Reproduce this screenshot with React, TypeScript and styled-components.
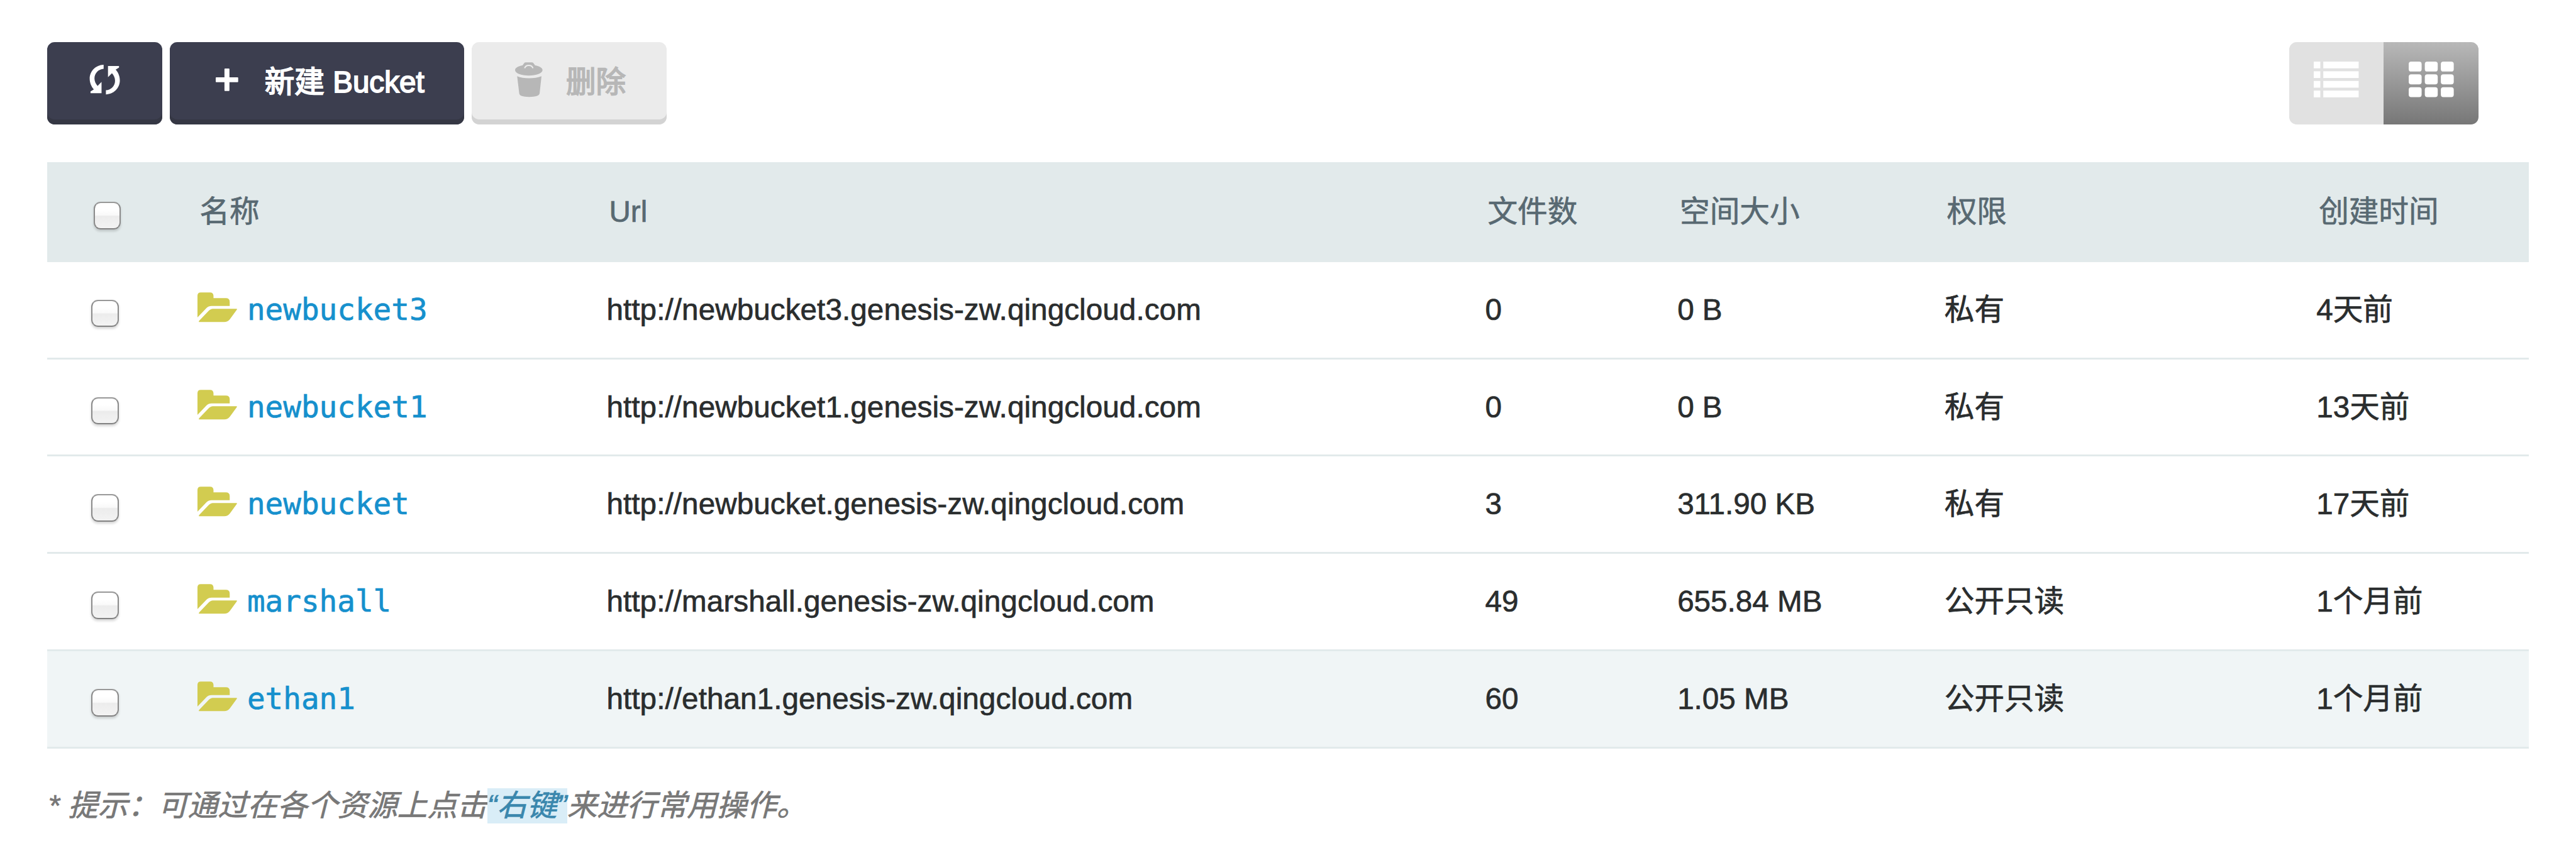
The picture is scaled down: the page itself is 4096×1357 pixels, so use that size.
import React from "react";
import styled, { createGlobalStyle } from "styled-components";

const u = (n: number) => `${(n * 4096) / 4128}px`;

const sans = `"Liberation Sans", "Noto Sans CJK SC", sans-serif`;
const mono = `"DejaVu Sans Mono", monospace`;

const GlobalStyle = createGlobalStyle`
  *, *::before, *::after { box-sizing: border-box; }
  html, body { margin: 0; padding: 0; background: #fff; }
`;

const Page = styled.main`
  width: 100%;
  height: 1357px;
  overflow: hidden;
  padding: ${u(68)} ${u(76)} 0;
  background: #fff;
  font-family: ${sans};
  font-size: ${u(48)};
  line-height: ${u(56)};
  color: #2a2d2e;
  -webkit-text-stroke: ${u(0.7)} currentColor;
`;

const Toolbar = styled.div`
  display: flex;
  justify-content: space-between;
  height: ${u(132)};
  margin-bottom: ${u(60)};
  padding-right: ${u(80)};
`;

const Actions = styled.div`
  display: flex;
  gap: ${u(12)};
`;

const Button = styled.button<{ $width: number; $pad: number; $gap: number }>`
  display: flex;
  align-items: center;
  gap: ${(p) => u(p.$gap)};
  width: ${(p) => u(p.$width)};
  height: 100%;
  padding: 0 0 ${u(5)} ${(p) => u(p.$pad)};
  border: 0;
  border-radius: ${u(12)};
  background: #3c3e4f;
  box-shadow: inset 0 -${u(8)} 0 #353744;
  color: #fff;
  font: inherit;
  white-space: nowrap;
  -webkit-text-stroke: ${u(1.8)} currentColor;

  &:disabled {
    background: #ebebeb;
    box-shadow: inset 0 -${u(8)} 0 #d3d3d3;
    color: #b7b7b7;
  }
`;

const Icon = styled.svg<{ $w: number; $h: number; $lift?: number }>`
  display: block;
  flex: none;
  width: ${(p) => u(p.$w)};
  height: ${(p) => u(p.$h)};
  margin-bottom: ${(p) => u(p.$lift ?? 0)};
  overflow: visible;
`;

const ViewSwitch = styled.div`
  display: flex;
  border-radius: ${u(12)};
  overflow: hidden;
`;

const ViewOption = styled.button<{ $active?: boolean }>`
  display: flex;
  justify-content: center;
  width: ${u(152)};
  height: 100%;
  padding: ${u(31)} 0 0;
  border: 0;
  background: ${(p) => (p.$active ? "linear-gradient(#b8b8b8, #777)" : "#e1e1e1")};
`;

const Table = styled.div`
  width: 100%;
`;

const Row = styled.div<{ $selected?: boolean }>`
  display: grid;
  grid-template-columns: ${[240, 656, 1408, 308, 428, 596].map(u).join(" ")} 1fr;
  align-items: center;
  height: ${u(156)};
  border-bottom: ${u(4)} solid #e2eaeb;
  background: ${(p) => (p.$selected ? "#f0f5f6" : "#fff")};
  white-space: nowrap;
`;

const HeadRow = styled(Row)`
  height: ${u(160)};
  padding-bottom: ${u(1)};
  border-bottom: 0;
  background: #e2eaeb;
  color: #586972;

  > * {
    padding-left: ${u(4)};
  }
`;

const CheckCell = styled.div`
  display: flex;
  padding: ${u(12)} 0 0 ${u(70)};

  ${HeadRow} > & {
    padding: ${u(12)} 0 0 ${u(74)};
  }
`;

const Checkbox = styled.input`
  appearance: none;
  width: ${u(44)};
  height: ${u(44)};
  margin: 0;
  border: ${u(3)} solid #8b8b8b;
  border-color: #989898 #8b8b8b #828282;
  border-radius: ${u(11)};
  background: linear-gradient(#fff 0 25%, #f9f9f9 48%, #ececec 52%, #f3f3f3);
  box-shadow: 0 ${u(3)} ${u(4)} rgba(0, 0, 0, 0.16);
`;

const NameCell = styled.div`
  display: flex;
  align-items: center;
  gap: ${u(16)};
`;

const BucketLink = styled.a`
  color: #1690cd;
  font-family: ${mono};
  text-decoration: none;
`;

const Cell = styled.div``;

const UrlCell = styled(Cell)`
  letter-spacing: ${u(0.08)};
`;

const Tip = styled.p`
  margin: ${u(64)} 0 0;
  padding-left: ${u(1)};
  color: #787878;
  font-style: italic;
  white-space: nowrap;
`;

const Highlight = styled.span`
  display: inline-block;
  background: #d9edf7;
  color: #3a87ad;
`;

const RefreshIcon = () => {
  const arc =
    "M90 30C52 31 23 61 23 97C23 117 31 136 43 149L27 159V167H80V113L61 132C52 122 46 110 46 96C46 72 65 51 90 50Z";
  return (
    <Icon viewBox="0 0 192 192" $w={64} $h={64} $lift={11} fill="currentColor">
      <path d={arc} />
      <path d={arc} transform="rotate(180 95.5 101.5)" />
    </Icon>
  );
};

const PlusIcon = () => (
  <Icon viewBox="0 0 36 36" $w={36} $h={36} $lift={7} fill="currentColor">
    <path d="M14 1q0-1 1-1h6q1 0 1 1v13h13q1 0 1 1v6q0 1-1 1H22v13q0 1-1 1h-6q-1 0-1-1V22H1q-1 0-1-1v-6q0-1 1-1h13z" />
  </Icon>
);

const TrashIcon = () => (
  <Icon viewBox="30 24 132 168" $w={44} $h={56} $lift={7} fill="currentColor">
    <path d="M66 39L73 29Q76 25 81 25H111Q116 25 119 29L126 39C148 43 162 51 162 62C162 77 132 88 96 88S30 77 30 62C30 51 44 43 66 39Z" />
    <path d="M76 53Q80 39 96 39T116 53" fill="none" stroke="#ebebeb" strokeWidth="6" />
    <path d="M40 91Q64 101 97 101T157 91L148 174Q145 191 98 191T50 174Z" />
  </Icon>
);

const ListIcon = () => (
  <Icon viewBox="0 0 72 57" $w={72} $h={57} fill="#fff">
    {[0, 15.5, 31, 46.5].map((y) => (
      <React.Fragment key={y}>
        <rect x="0" y={y} width="10.5" height="10.8" />
        <rect x="15.3" y={y} width="56.7" height="10.8" />
      </React.Fragment>
    ))}
  </Icon>
);

const GridIcon = () => (
  <Icon viewBox="0 0 72 57" $w={72} $h={57} fill="#fff">
    {[0, 20.5, 41].map((y) =>
      [0, 25.8, 51.5].map((x) => (
        <rect key={`${x}-${y}`} x={x} y={y} width="20.7" height="16" rx="4" />
      )),
    )}
  </Icon>
);

const FolderIcon = () => (
  <Icon viewBox="18 24 192 144" $w={64} $h={48} $lift={8} fill="#d2cc50">
    <path d="M18 145V41Q18 25 34 25H78Q94 25 95 41V52H154Q173 52 173 70V90H86Q71 90 62 99Z" />
    <path d="M25 167Q23 164 27 160L71 114Q81 103 92 103H206Q210 103 207 108L174 153Q163 167 147 167Z" />
  </Icon>
);

const buckets = [
  { name: "newbucket3", files: "0", size: "0 B", access: "私有", created: "4天前" },
  { name: "newbucket1", files: "0", size: "0 B", access: "私有", created: "13天前" },
  { name: "newbucket", files: "3", size: "311.90 KB", access: "私有", created: "17天前" },
  { name: "marshall", files: "49", size: "655.84 MB", access: "公开只读", created: "1个月前" },
  { name: "ethan1", files: "60", size: "1.05 MB", access: "公开只读", created: "1个月前", selected: true },
];

const headings = ["名称", "Url", "文件数", "空间大小", "权限", "创建时间"];

export default function App() {
  return (
    <Page>
      <GlobalStyle />
      <Toolbar>
        <Actions>
          <Button $width={184} $pad={60} $gap={0} aria-label="刷新">
            <RefreshIcon />
          </Button>
          <Button $width={472} $pad={74} $gap={42}>
            <PlusIcon />
            <span>新建 Bucket</span>
          </Button>
          <Button $width={312} $pad={69} $gap={38} disabled>
            <TrashIcon />
            <span>删除</span>
          </Button>
        </Actions>
        <ViewSwitch>
          <ViewOption aria-label="列表">
            <ListIcon />
          </ViewOption>
          <ViewOption $active aria-label="网格">
            <GridIcon />
          </ViewOption>
        </ViewSwitch>
      </Toolbar>
      <Table>
        <HeadRow>
          <CheckCell>
            <Checkbox type="checkbox" />
          </CheckCell>
          {headings.map((h) => (
            <Cell key={h}>{h}</Cell>
          ))}
        </HeadRow>
        {buckets.map((b) => (
          <Row key={b.name} $selected={b.selected}>
            <CheckCell>
              <Checkbox type="checkbox" />
            </CheckCell>
            <NameCell>
              <FolderIcon />
              <BucketLink>{b.name}</BucketLink>
            </NameCell>
            <UrlCell>{`http://${b.name}.genesis-zw.qingcloud.com`}</UrlCell>
            <Cell>{b.files}</Cell>
            <Cell>{b.size}</Cell>
            <Cell>{b.access}</Cell>
            <Cell>{b.created}</Cell>
          </Row>
        ))}
      </Table>
      <Tip>
        * 提示：可通过在各个资源上点击<Highlight>“右键”</Highlight>来进行常用操作。
      </Tip>
    </Page>
  );
}
